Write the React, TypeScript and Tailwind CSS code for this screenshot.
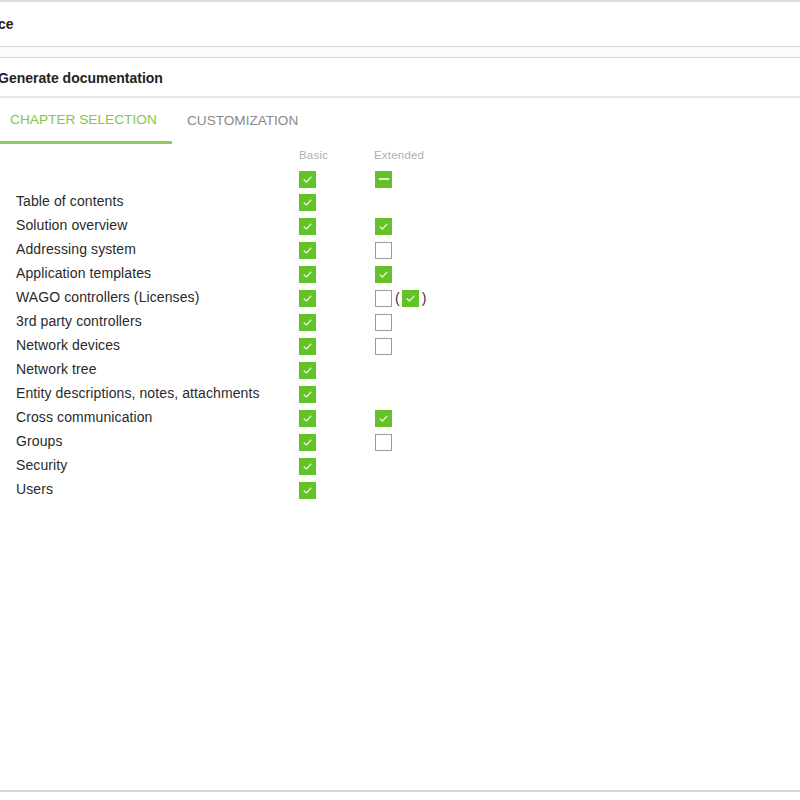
import React from "react";

type Ext = "on" | "off" | "none" | "license";

const rows: { label: string; ext: Ext }[] = [
  { label: "Table of contents", ext: "none" },
  { label: "Solution overview", ext: "on" },
  { label: "Addressing system", ext: "off" },
  { label: "Application templates", ext: "on" },
  { label: "WAGO controllers (Licenses)", ext: "license" },
  { label: "3rd party controllers", ext: "off" },
  { label: "Network devices", ext: "off" },
  { label: "Network tree", ext: "none" },
  { label: "Entity descriptions, notes, attachments", ext: "none" },
  { label: "Cross communication", ext: "on" },
  { label: "Groups", ext: "off" },
  { label: "Security", ext: "none" },
  { label: "Users", ext: "none" },
];

function Box({ state }: { state: "on" | "off" | "mixed" }) {
  if (state === "off") {
    return <span className="block w-[17px] h-[17px] border border-[#9a9a9a] bg-white" />;
  }
  return (
    <span className="flex items-center justify-center w-[17px] h-[17px] bg-[#62c228]">
      {state === "on" ? (
        <svg width="11" height="11" viewBox="0 0 12 12" fill="none">
          <path d="M2.2 6.4 L4.8 8.8 L9.8 3.4" stroke="#e6f7da" strokeWidth="1.5" strokeLinecap="round" strokeLinejoin="round" />
        </svg>
      ) : (
        <span className="block w-[10px] h-[2px] bg-[#e6f7da]" />
      )}
    </span>
  );
}

export default function App() {
  return (
    <div className="w-[800px] h-[800px] bg-white flex flex-col text-[#222] text-[14px]" style={{ fontFamily: '"Liberation Sans", Arial, sans-serif' }}>
      {/* Top header */}
      <div className="border-t-2 border-[#dcdcdc] h-[46px] flex items-center">
        <span className="font-bold -ml-[2px]">ce</span>
      </div>
      <div className="h-[12px] border-y border-[#d4d4d4] bg-[#fbfbfb]" />

      {/* Dialog title */}
      <div className="h-[40px] flex items-center border-b-2 border-[#e6e6e6] pt-[2px]">
        <span className="font-bold -ml-[2px]">Generate documentation</span>
      </div>

      {/* Tabs */}
      <div className="flex h-[46px]">
        <div className="w-[172px] flex items-center pl-[10px] pt-[1px] border-b-[3px] border-[#8ccc5e] text-[#86c64a] text-[13.7px]">
          CHAPTER SELECTION
        </div>
        <div className="flex items-center pl-[15px] text-[#8a8a8a] text-[13.6px]">CUSTOMIZATION</div>
      </div>

      {/* Chapter table */}
      <div className="flex-1 pl-[16px] pt-[2px]">
        <div className="flex h-[20px] items-center text-[11.5px] text-[#b0b0b0] tracking-[0.2px]">
          <div className="w-[283px]" />
          <div className="w-[75px]">Basic</div>
          <div>Extended</div>
        </div>
        <div className="flex h-[22px] items-center mt-[2px]">
          <div className="w-[283px]" />
          <div className="w-[76px]"><Box state="on" /></div>
          <div><Box state="mixed" /></div>
        </div>
        {rows.map((r) => (
          <div key={r.label} className="flex h-[24px] items-center">
            <div className="w-[283px] text-[#2a2a2a] tracking-[0.1px] -mt-[1px]">{r.label}</div>
            <div className="w-[76px]"><Box state="on" /></div>
            <div className="flex items-center">
              {r.ext === "on" && <Box state="on" />}
              {r.ext === "off" && <Box state="off" />}
              {r.ext === "license" && (
                <>
                  <Box state="off" />
                  <span className="ml-[3px] mr-[2px] text-[#333]">(</span>
                  <Box state="on" />
                  <span className="ml-[3px] text-[#333]">)</span>
                </>
              )}
            </div>
          </div>
        ))}
      </div>

      <div className="h-[10px] border-t-2 border-[#d8d8d8]" />
    </div>
  );
}
